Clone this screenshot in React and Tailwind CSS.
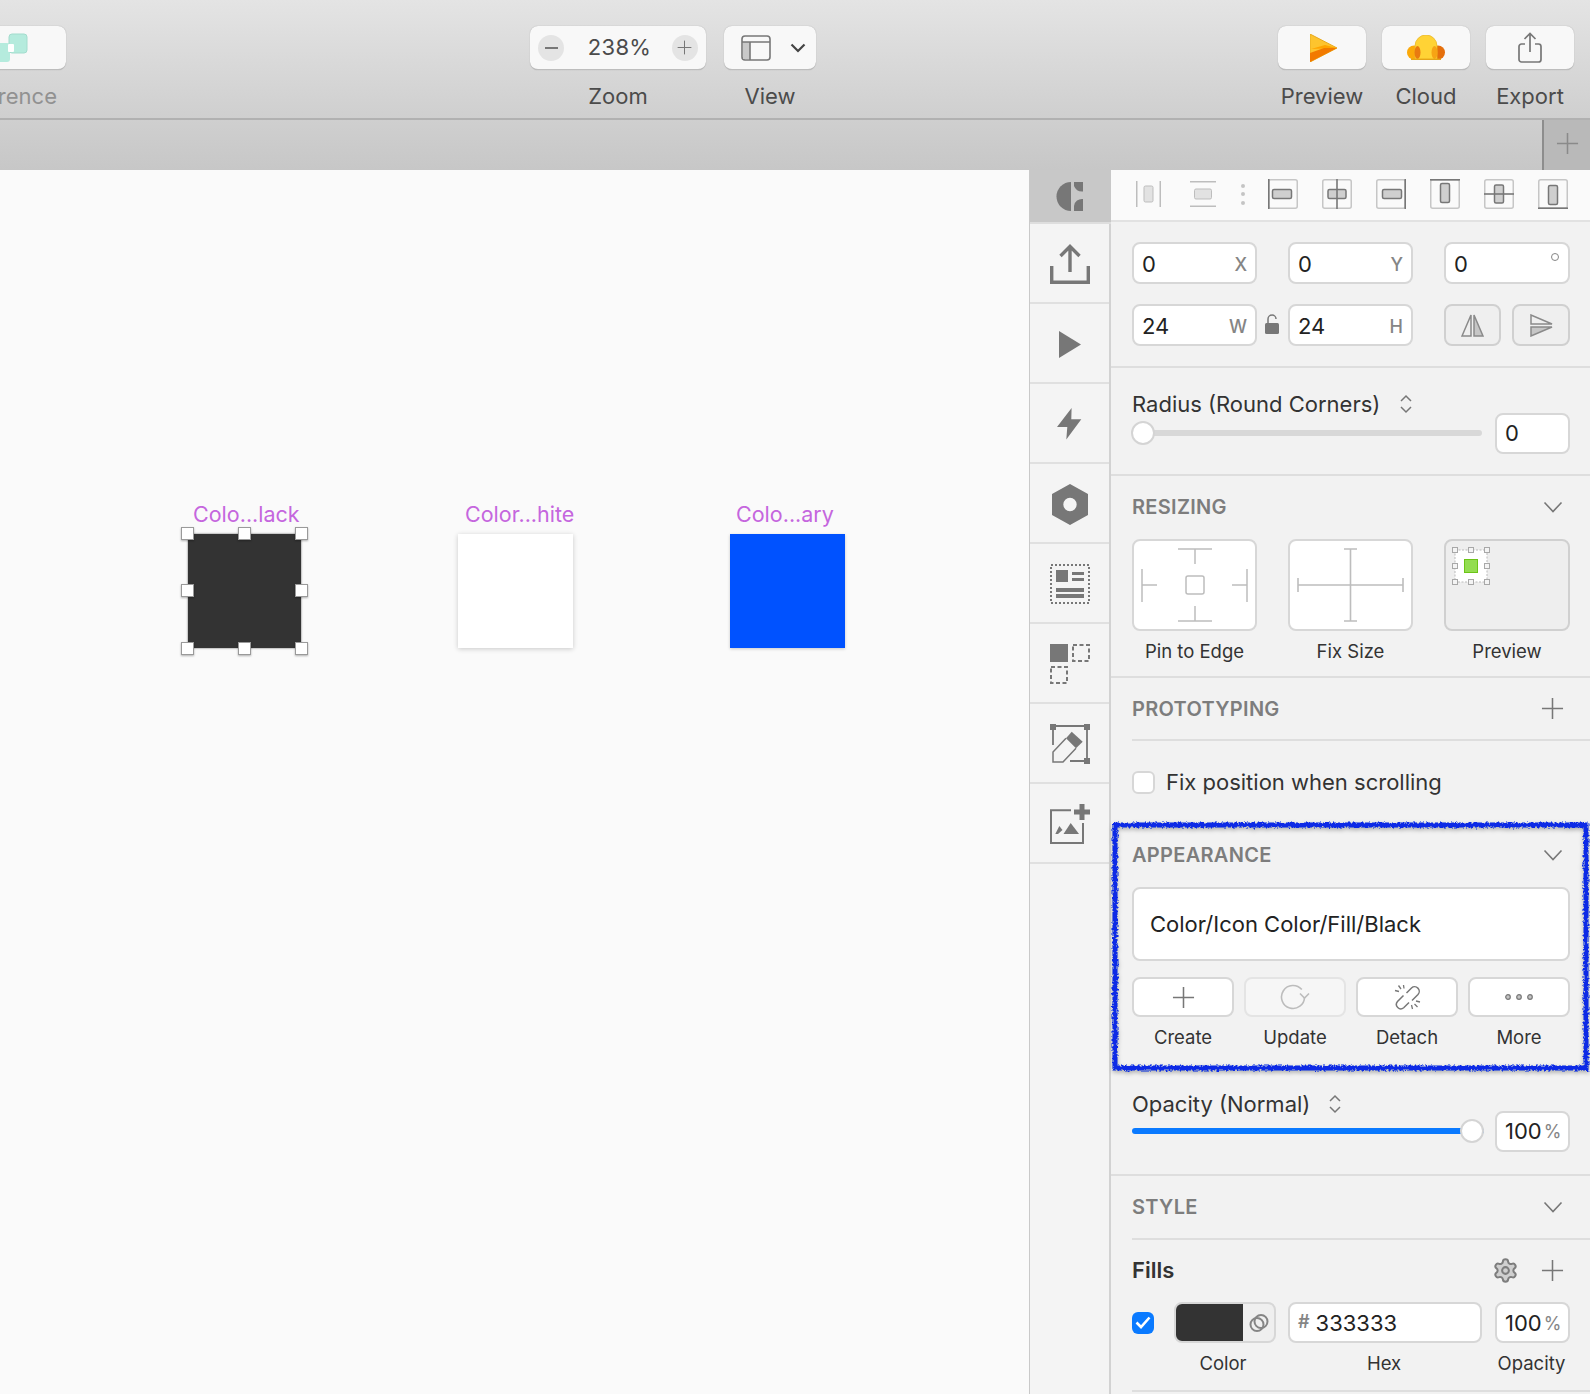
import { Settings } from 'lucide-react';

const ChevronDown = ({ className = 'w-[20px] h-[12px]' }) => (
  <svg viewBox="0 0 20 12" className={className} fill="none" stroke="#777" strokeWidth="1.6">
    <path d="M1.5 1.5 10 10.5 18.5 1.5" />
  </svg>
);

const Plus = ({ size = 23, color = '#777', width = 1.6 }) => (
  <svg viewBox="0 0 24 24" width={size} height={size} fill="none" stroke={color} strokeWidth={width}>
    <path d="M12 1v22M1 12h22" />
  </svg>
);

const UpDown = () => (
  <svg viewBox="0 0 14 20" className="w-[14px] h-[20px]" fill="none" stroke="#777" strokeWidth="1.5">
    <path d="M2 7 7 2l5 5M2 13l5 5 5-5" />
  </svg>
);

function ToolItem({ label, className = '', children }) {
  return (
    <div className={`flex flex-col items-center ${className}`}>
      <div className="w-full h-[44px] rounded-lg bg-[#f8f8f8] border-b border-[#bdbdbd] shadow-[0_0_1px_rgba(0,0,0,0.3)] flex items-center justify-center">
        {children}
      </div>
      <div className="mt-[13px] text-[22px] leading-[26px] text-[#4b4b4b]">{label}</div>
    </div>
  );
}

function Toolbar() {
  return (
    <div className="h-[120px] shrink-0 flex pt-[26px] bg-linear-to-b from-[#e4e4e4] to-[#cfcfcf] border-b-2 border-[#b1b1b1]">
      <div className="w-[66px] shrink-0 flex flex-col items-end">
        <div className="w-full h-[44px] rounded-r-lg bg-[#f8f8f8] border-b border-[#bdbdbd] shadow-[0_0_1px_rgba(0,0,0,0.3)] flex items-center overflow-hidden">
          <svg width="28" height="30" viewBox="0 0 28 30">
            <rect x="-7" y="10" width="17" height="19" rx="3" fill="#b5ebdd" />
            <rect x="9" y="1" width="18" height="19" rx="3" fill="#b5ebdd" stroke="#a3dccd" />
            <rect x="8" y="11" width="6" height="8" rx="1" fill="#fff" />
          </svg>
        </div>
        <div className="mt-[13px] mr-[9px] text-[22px] leading-[26px] text-[#919191]">rence</div>
      </div>

      <ToolItem label="Zoom" className="w-[176px] ml-[464px]">
        <div className="flex items-center w-full px-[8px] justify-between">
          <div className="w-[26px] h-[26px] rounded-full bg-[#e4e4e4] flex items-center justify-center"><div className="w-[13px] h-[2px] bg-[#777]" /></div>
          <span className="ml-[3px] text-[22px] text-[#4b4b4b] tracking-[0.3px]">238%</span>
          <div className="w-[26px] h-[26px] rounded-full bg-[#e4e4e4] flex items-center justify-center"><Plus size={15} /></div>
        </div>
      </ToolItem>
      <ToolItem label="View" className="w-[92px] ml-[18px]">
        <svg width="30" height="26" viewBox="0 0 30 26" className="mr-[19px] ml-[6px]">
          <rect x="1" y="1" width="28" height="24" rx="3" fill="none" stroke="#777" strokeWidth="1.6" />
          <rect x="2" y="7" width="7" height="17" fill="#c9c9c9" />
          <path d="M1 7h28M9 7v18" stroke="#777" strokeWidth="1.6" />
        </svg>
        <svg width="16" height="10" viewBox="0 0 16 10" fill="none" stroke="#444" strokeWidth="2.2"><path d="M1.500 1.500 8 8l6.500-6.500" /></svg>
      </ToolItem>

      <ToolItem label="Preview" className="w-[88px] ml-[462px]">
        <svg width="27" height="28" viewBox="0 0 27 28" className="ml-[2px]">
          <path d="M0 0 27 14 0 28Z" fill="#fdc42e" />
          <path d="M0 0 27 14 0 28Z" fill="none" stroke="#e7a91e" strokeWidth="1" />
          <path d="M1 15 15 11 27 14Z" fill="#ffa400" />
          <path d="M0 28V19L14 14H27Z" fill="#f27a00" />
        </svg>
      </ToolItem>
      <ToolItem label="Cloud" className="w-[88px] ml-[16px]">
        <svg width="38" height="25" viewBox="0 0 38 25">
          <circle cx="7" cy="17.500" r="7" fill="#fba90a" />
          <circle cx="31" cy="17.500" r="7" fill="#e56f0c" />
          <path d="M8 24.500V11a11 11 0 0 1 22 0V24.500Z" fill="#ffd335" stroke="#eab72a" strokeWidth="0.800" />
          <ellipse cx="10.500" cy="17.500" rx="3" ry="6.500" fill="#e97a10" />
          <ellipse cx="27.500" cy="17.500" rx="3" ry="6.500" fill="#f7a414" />
          <path d="M4 24.300h30" stroke="#e5a517" strokeWidth="1.400" />
        </svg>
      </ToolItem>
      <ToolItem label="Export" className="w-[88px] ml-[16px]">
        <svg width="24" height="31" viewBox="0 0 24 31" fill="none" stroke="#777" strokeWidth="1.7">
          <path d="M7 12H3.500A2.500 2.500 0 0 0 1 14.500V27.500A2.500 2.500 0 0 0 3.500 30h17a2.500 2.500 0 0 0 2.500-2.500V14.500A2.500 2.500 0 0 0 20.500 12H17" />
          <path d="M12 20V1.500M6.500 7 12 1.500 17.500 7" />
        </svg>
      </ToolItem>
    </div>
  );
}

function TabBar() {
  return (
    <div className="h-[50px] shrink-0 flex justify-end bg-linear-to-b from-[#cfcfcf] to-[#c7c7c7]">
      <div className="w-[48px] bg-[#b9b9b9] border-l-2 border-[#8d8d8d] flex items-center justify-center pb-[4px]">
        <Plus size={23} color="#8a8a8a" />
      </div>
    </div>
  );
}

const handleSpots = [
  'left-[-7px] top-[-7px]', 'left-[50px] top-[-7px]', 'right-[-7px] top-[-7px]',
  'left-[-7px] top-[50px]', 'right-[-7px] top-[50px]',
  'left-[-7px] bottom-[-7px]', 'left-[50px] bottom-[-7px]', 'right-[-7px] bottom-[-7px]',
];

function Artboard({ label, labelClass, className, selected }) {
  return (
    <div className={`relative h-[114px] shrink-0 ${className}`}>
      <div className={`absolute bottom-full mb-[7px] whitespace-nowrap text-[21.500px] leading-[26px] text-[#c566de] ${labelClass}`}>{label}</div>
      {selected && handleSpots.map((spot) => (
        <div key={spot} className={`absolute w-[13px] h-[13px] bg-white border border-[#9a9a9a] shadow-[0_1px_2px_rgba(0,0,0,0.3)] ${spot}`} />
      ))}
    </div>
  );
}

function Canvas() {
  return (
    <div className="w-[1029px] shrink-0 bg-[#fafafa] pt-[364px] pl-[188px] flex gap-[157px] items-start">
      <Artboard label="Colo...lack" labelClass="left-[5px]" className="w-[113px] bg-[#333333] shadow-[0_0_2px_rgba(0,0,0,0.6)]" selected />
      <Artboard label="Color...hite" labelClass="left-[7px]" className="w-[115px] bg-white shadow-[0_1px_5px_rgba(0,0,0,0.2)]" />
      <Artboard label="Colo...ary" labelClass="left-[6px]" className="w-[115px] bg-[#0052ff] shadow-[0_1px_3px_rgba(0,0,0,0.2)]" />
    </div>
  );
}

function Rail() {
  const cells = [
    <svg key="upload" width="40" height="40" viewBox="0 0 40 40" fill="none" stroke="#777" strokeWidth="3.400">
      <path d="M1.700 22V38.300H38.300V22" />
      <path d="M20 28V3.500M10.500 12 20 2.500 29.500 12" />
    </svg>,
    <svg key="play" width="22" height="27" viewBox="0 0 22 27" fill="#777"><path d="M0 0 22 13.500 0 27Z" /></svg>,
    <svg key="bolt" width="25" height="32" viewBox="0 0 25 32" fill="#777"><path d="M14.600 0 0 19H10.300L9.300 31.500 24.300 11.300H14.300Z" /></svg>,
    <svg key="hex" width="36" height="41" viewBox="0 0 36 41">
      <path fillRule="evenodd" fill="#777" d="M18 0 36 10V31L18 41 0 31V10ZM18 13.800a6.700 6.700 0 1 0 0 13.400 6.700 6.700 0 0 0 0-13.400Z" />
    </svg>,
    <svg key="data" width="40" height="40" viewBox="0 0 40 40" fill="#777">
      <rect x="1" y="1" width="38" height="38" fill="none" stroke="#777" strokeWidth="2" strokeDasharray="2 2" />
      <rect x="6" y="6" width="12" height="12" />
      <rect x="22" y="8" width="12" height="3" />
      <rect x="22" y="14" width="12" height="3" />
      <rect x="6" y="24" width="28" height="4" />
      <rect x="6" y="30" width="28" height="4" />
    </svg>,
    <svg key="symbols" width="40" height="40" viewBox="0 0 40 40">
      <rect width="18" height="18" fill="#777" />
      <rect x="23" y="1" width="16" height="16" fill="none" stroke="#777" strokeWidth="2" strokeDasharray="4 2.500" />
      <rect x="1" y="23" width="16" height="16" fill="none" stroke="#777" strokeWidth="2" strokeDasharray="4 2.500" />
    </svg>,
    <svg key="edit" width="40" height="40" viewBox="0 0 40 40" fill="#777">
      <rect width="6" height="6" />
      <rect x="34" width="6" height="6" />
      <rect x="34" y="34" width="6" height="6" />
      <path d="M6 2H34M37 6V34M3 6V21M20 37H34" fill="none" stroke="#777" strokeWidth="1.800" />
      <path d="M21.700 7.700 32.700 17.700 26 24.300 16 14.300Z" />
      <path d="M16 14.300 3 28V38H13L26 24.300" fill="none" stroke="#777" strokeWidth="1.500" />
    </svg>,
    <svg key="image" width="40" height="40" viewBox="0 0 40 40" fill="#777">
      <path d="M21 6.300H1V39H33V19" fill="none" stroke="#777" strokeWidth="2" />
      <rect x="24" y="5.500" width="16" height="5" />
      <rect x="29.500" width="5" height="16" />
      <path d="M20.700 19 29 30H13.500Z" />
      <path d="M9.300 22 12.500 26 8 30H5.300Z" />
    </svg>,
  ];
  return (
    <div className="w-[82px] shrink-0 bg-[#f4f4f4] border-l border-[#c9c9c9] border-r-2 border-r-[#d2d2d2] flex flex-col">
      <div className="h-[54px] -mr-[2px] bg-[#c8c8c8] border-b-2 border-[#dedede] flex items-center justify-center pr-[5px]">
        <svg width="29" height="29" viewBox="0 0 29 29" fill="#777">
          <path d="M17 0A14.500 14.500 0 0 0 17 29Z" />
          <path d="M20 0H29V9.500A9 9 0 0 1 20 4Z" />
          <path d="M20 29V24A8 8 0 0 1 29 17V29Z" />
        </svg>
      </div>
      {cells.map((icon) => (
        <div key={icon.key} className="h-[80px] border-b-2 border-[#e0e0e0] flex items-center justify-center pt-[2px]">{icon}</div>
      ))}
    </div>
  );
}

function AlignIcon({ bar, line }) {
  return (
    <svg width="30" height="30" viewBox="0 0 30 30" fill="none">
      <rect x="0.750" y="0.750" width="28.500" height="28.500" rx="2" stroke="#c6c6c6" strokeWidth="1.500" />
      <rect {...bar} rx="1.500" fill="#cfcfcf" stroke="#777" strokeWidth="1.500" />
      <path d={line} stroke="#777" strokeWidth="1.600" />
    </svg>
  );
}

function AlignRow() {
  return (
    <div className="h-[52px] shrink-0 bg-[#fafafa] border-b-2 border-[#e2e2e2] flex items-center pl-[25px] pb-[2px]">
      <svg width="25" height="26" viewBox="0 0 25 26" fill="none">
        <path d="M0.750 0V26M24.250 0V26" stroke="#bdbdbd" strokeWidth="1.500" />
        <rect x="8" y="5" width="9" height="16" rx="1.500" fill="#e2e2e2" stroke="#bdbdbd" />
      </svg>
      <svg width="26" height="26" viewBox="0 0 26 26" fill="none" className="ml-[29px]">
        <path d="M0 0.750H26M0 25.250H26" stroke="#bdbdbd" strokeWidth="1.500" />
        <rect x="4.500" y="8" width="17" height="10" rx="1.500" fill="#e2e2e2" stroke="#bdbdbd" />
      </svg>
      <div className="ml-[25px] w-[4px] flex flex-col gap-[4.500px]">
        <div className="w-[4px] h-[4px] rounded-full bg-[#c4c4c4]" />
        <div className="w-[4px] h-[4px] rounded-full bg-[#c4c4c4]" />
        <div className="w-[4px] h-[4px] rounded-full bg-[#c4c4c4]" />
      </div>
      <div className="ml-[23px] flex gap-[24px]">
        <AlignIcon bar={{ x: 4.500, y: 10.500, width: 19, height: 9 }} line="M0.800 0V30" />
        <AlignIcon bar={{ x: 6, y: 10.500, width: 18, height: 9 }} line="M15 0V30" />
        <AlignIcon bar={{ x: 6.500, y: 10.500, width: 19, height: 9 }} line="M29.200 0V30" />
        <AlignIcon bar={{ x: 10.500, y: 4.500, width: 9, height: 19 }} line="M0 0.800H30" />
        <AlignIcon bar={{ x: 10.500, y: 6, width: 9, height: 18 }} line="M0 15H30" />
        <AlignIcon bar={{ x: 10.500, y: 6.500, width: 9, height: 19 }} line="M0 29.200H30" />
      </div>
    </div>
  );
}

function Field({ value, suffix }) {
  return (
    <div className="h-[42px] w-[125px] shrink-0 rounded-lg border-2 border-[#d7d7d7] bg-white flex items-center justify-between pl-[8px] pr-[8px] pt-[2px] text-[22px] text-[#222]">
      <span>{value}</span>
      {suffix && <span className="text-[18px] font-medium text-[#858585]">{suffix}</span>}
    </div>
  );
}

function Transform() {
  return (
    <div className="h-[146px] shrink-0 border-b-2 border-[#dedede] pt-[20px] pl-[21px] flex flex-col gap-[20px]">
      <div className="flex gap-[31px]">
        <Field value="0" suffix="X" />
        <Field value="0" suffix="Y" />
        <div className="h-[42px] w-[126px] shrink-0 rounded-lg border-2 border-[#d7d7d7] bg-white flex justify-between pl-[8px] pr-[9px] pt-[2px] text-[22px] text-[#222]">
          <span className="self-center">0</span>
          <div className="w-[8px] h-[8px] mt-[7px] rounded-full border-[1.500px] border-[#858585]" />
        </div>
      </div>
      <div className="flex items-center">
        <Field value="24" suffix="W" />
        <div className="w-[31px] flex justify-center pb-[3px]">
          <svg width="15" height="20" viewBox="0 0 15 20" fill="#777">
            <path d="M3 9V5a4 4 0 0 1 8 0" fill="none" stroke="#777" strokeWidth="1.500" />
            <rect y="9" width="14" height="11" rx="1.500" />
          </svg>
        </div>
        <Field value="24" suffix="H" />
        <div className="ml-[31px] flex gap-[11px]">
          <div className="w-[57px] h-[42px] rounded-lg border-2 border-[#d0d0d0] bg-[#efefef] flex items-center justify-center">
            <svg width="23" height="23" viewBox="0 0 23 23" stroke="#8a8a8a" strokeWidth="1.500">
              <path d="M10 1 1 22H10Z" fill="none" />
              <path d="M13 1 22 22H13Z" fill="#c6c6c6" />
            </svg>
          </div>
          <div className="w-[58px] h-[42px] rounded-lg border-2 border-[#d0d0d0] bg-[#efefef] flex items-center justify-center">
            <svg width="23" height="23" viewBox="0 0 23 23" stroke="#8a8a8a" strokeWidth="1.500">
              <path d="M1 10 22 10 1 1Z" fill="none" />
              <path d="M1 13 22 13 1 22Z" fill="#c6c6c6" />
            </svg>
          </div>
        </div>
      </div>
    </div>
  );
}

function SliderRow({ label, value, percent, leftWidth, topPad, knobGap, fieldTop, gap, className }) {
  return (
    <div className={`shrink-0 border-b-2 border-[#dedede] pl-[21px] pr-[20px] flex justify-between ${className}`}>
      <div className={`${leftWidth} ${topPad}`}>
        <div className={`flex items-center text-[22px] leading-[26px] text-[#333] ${gap}`}>
          <span>{label}</span>
          <UpDown />
        </div>
        <div className={`relative h-[24px] flex items-center ${knobGap}`}>
          <div className="w-full h-[6px] rounded-full bg-[#d8d8d8] overflow-hidden">
            <div className="h-full bg-[#0a7aff]" style={{ width: `${percent}%` }} />
          </div>
          <div className={`absolute top-0 w-[24px] h-[24px] rounded-full bg-white border-2 border-[#d4d4d4] ${percent > 50 ? 'right-0' : 'left-[-1px]'}`} />
        </div>
      </div>
      <div className={fieldTop}>
        <div className="h-[41px] w-[75px] rounded-lg border-2 border-[#d7d7d7] bg-white flex items-center pl-[8px] text-[22px] text-[#222]">
          {value}
        </div>
      </div>
    </div>
  );
}

function SectionHeader({ title, icon, className = '' }) {
  return (
    <div className={`flex items-center justify-between ${className}`}>
      <span className="text-[20px] leading-[24px] font-semibold tracking-[0.3px] text-[#7d7d7d]">{title}</span>
      {icon || <ChevronDown />}
    </div>
  );
}

function Resizing() {
  return (
    <div className="h-[202px] shrink-0 border-b-2 border-[#dedede] pt-[19px] pl-[21px]">
      <SectionHeader title="RESIZING" className="pr-[27px]" />
      <div className="mt-[20px] flex gap-[31px]">
        <div className="w-[125px] h-[92px] rounded-lg border-2 border-[#d7d7d7] bg-white">
          <svg width="121" height="88" viewBox="0 0 121 88" fill="none" stroke="#bdbdbd" strokeWidth="1.500">
            <path d="M44 8H78M61 8V23M44 80H78M61 65V80M8 28V61M8 44H23M113 28V61M98 44H113" />
            <rect x="52" y="35" width="18" height="18" rx="2" />
          </svg>
        </div>
        <div className="w-[125px] h-[92px] rounded-lg border-2 border-[#d7d7d7] bg-white">
          <svg width="121" height="88" viewBox="0 0 121 88" fill="none" stroke="#bdbdbd" strokeWidth="1.600">
            <path d="M60.500 8V80M54 8H67M54 80H67M8 44H113M8 37V51M113 37V51" />
          </svg>
        </div>
        <div className="w-[126px] h-[92px] rounded-lg border-2 border-[#d0d0d0] bg-[#eeeeee]">
          <svg width="50" height="50" viewBox="0 0 50 50" fill="none">
            <rect x="9" y="9" width="32" height="32" fill="#fff" stroke="#bbb" strokeDasharray="2 1.500" />
            {[[9, 9], [25, 9], [41, 9], [9, 25], [41, 25], [9, 41], [25, 41], [41, 41]].map(([x, y]) => (
              <rect key={`${x}-${y}`} x={x - 2.500} y={y - 2.500} width="5" height="5" fill="#f4f4f4" stroke="#a8a8a8" />
            ))}
            <rect x="18.500" y="18.500" width="13" height="13" fill="#93dd50" stroke="#6cc417" />
          </svg>
        </div>
      </div>
      <div className="mt-[8px] flex gap-[31px] text-[18.500px] leading-[24px] text-[#333] text-center">
        <div className="w-[125px]">Pin to Edge</div>
        <div className="w-[125px]">Fix Size</div>
        <div className="w-[126px]">Preview</div>
      </div>
    </div>
  );
}

function Prototyping() {
  return (
    <div className="h-[144px] shrink-0 pl-[21px] flex flex-col">
      <SectionHeader title="PROTOTYPING" icon={<Plus />} className="h-[63px] shrink-0 border-b-2 border-[#dedede] pr-[26px]" />
      <div className="flex-1 flex items-center gap-[11px] pt-[2px]">
        <div className="w-[23px] h-[23px] rounded-md border-2 border-[#d7d7d7] bg-white" />
        <span className="text-[22px] text-[#333]">Fix position when scrolling</span>
      </div>
    </div>
  );
}

function ActionButton({ label, disabled, children }) {
  return (
    <div className="w-[102px]">
      <div className={`h-[40px] rounded-lg border-2 flex items-center justify-center ${disabled ? 'bg-[#f6f6f6] border-[#e4e4e4]' : 'bg-white border-[#d7d7d7]'}`}>
        {children}
      </div>
      <div className="mt-[8px] text-center text-[18.500px] leading-[24px] text-[#333]">{label}</div>
    </div>
  );
}

function Appearance() {
  return (
    <div className="relative h-[250px] shrink-0 pt-[21px] pl-[21px] pr-[20px]">
      <SectionHeader title="APPEARANCE" className="-mr-[20px] pr-[27px]" />
      <div className="mt-[20px] h-[74px] rounded-lg border-2 border-[#d7d7d7] bg-white flex items-center pl-[16px] text-[22px] text-[#222]">
        Color/Icon Color/Fill/Black
      </div>
      <div className="mt-[16px] flex justify-between">
        <ActionButton label="Create"><Plus size={23} /></ActionButton>
        <ActionButton label="Update" disabled>
          <svg width="30" height="28" viewBox="0 0 30 28" fill="none" stroke="#bcbcbc" strokeWidth="1.600">
            <path d="M24.500 14A11.500 11.500 0 1 1 21.800 6.600" />
            <path d="M20 10.500 24.500 15 29 10.500" />
          </svg>
        </ActionButton>
        <ActionButton label="Detach">
          <svg width="27" height="27" viewBox="0 0 27 27" fill="none" stroke="#777" strokeWidth="1.500">
            <path d="M12.500 9 17.500 4a4.600 4.600 0 0 1 6.500 6.500L18 16.500" />
            <path d="M9.500 11.500 3.500 17.500a4.400 4.400 0 0 0 6.200 6.200L15 18.500" />
            <path d="M4.500 1.500 7 5M1 6.500l4 1M9.500 1l.5 3.500M22 17l4 1M17.500 21l1 4M20.500 20l3 3" strokeWidth="1.300" />
          </svg>
        </ActionButton>
        <ActionButton label="More">
          <svg width="28" height="6" viewBox="0 0 28 6" fill="#c4c4c4" stroke="#777" strokeWidth="1.200">
            <circle cx="3" cy="3" r="2.300" />
            <circle cx="14" cy="3" r="2.300" />
            <circle cx="25" cy="3" r="2.300" />
          </svg>
        </ActionButton>
      </div>
      {/* hand drawn highlight over the section */}
      <svg className="absolute inset-0 w-full h-full overflow-visible pointer-events-none drop-shadow-[0_2px_2px_rgba(0,0,0,0.3)]">
        <filter id="rough" x="-5%" y="-5%" width="110%" height="110%">
          <feTurbulence type="fractalNoise" baseFrequency="0.45" numOctaves="2" seed="4" />
          <feDisplacementMap in="SourceGraphic" scale="5" />
        </filter>
        <rect x="4" y="3" width="471" height="243" fill="none" stroke="#0a2ce6" strokeWidth="5" filter="url(#rough)" />
      </svg>
    </div>
  );
}

function Fills() {
  return (
    <div className="h-[152px] shrink-0 ml-[21px] border-b-2 border-[#dedede] pt-[18px] pr-[20px]">
      <div className="flex items-center justify-between h-[24px]">
        <span className="text-[22px] font-semibold text-[#333]">Fills</span>
        <div className="flex items-center gap-[22px] mr-[6px]">
          <Settings size={27} color="#7d7d7d" fill="#cfcfcf" strokeWidth={1.800} />
          <Plus />
        </div>
      </div>
      <div className="mt-[20px] flex items-center">
        <div className="w-[22px] h-[22px] rounded-md bg-[#0a7aff] flex items-center justify-center">
          <svg width="16" height="13" viewBox="0 0 16 13" fill="none" stroke="#fff" strokeWidth="2.600"><path d="M1.500 6.500 6 11l8.500-9.500" /></svg>
        </div>
        <div className="ml-[20px] w-[102px] h-[41px] rounded-lg border-2 border-[#d7d7d7] bg-[#efefef] flex items-center overflow-hidden">
          <div className="w-[69px] h-[41px] -ml-[2px] shrink-0 bg-[#333333]" />
          <svg width="20" height="20" viewBox="0 0 20 20" fill="none" stroke="#858585" strokeWidth="2" className="ml-[6px]">
            <circle cx="8" cy="11.500" r="6.500" />
            <circle cx="12" cy="8.500" r="6.500" />
          </svg>
        </div>
        <div className="ml-[12px] w-[194px] h-[41px] rounded-lg border-2 border-[#d7d7d7] bg-white flex items-center pl-[8px] pt-[2px] text-[22px] text-[#222]">
          <span className="text-[18px] font-semibold text-[#858585] mr-[6px] -mt-[5px]">#</span>
          333333
        </div>
        <div className="ml-[13px] w-[75px] h-[41px] rounded-lg border-2 border-[#d7d7d7] bg-white flex items-center pl-[8px] pt-[2px] text-[22px] text-[#222]">
          100<span className="ml-[2px] text-[18px] text-[#858585]">%</span>
        </div>
      </div>
      <div className="mt-[8px] flex text-[18.500px] leading-[24px] text-[#333] text-center">
        <div className="ml-[40px] w-[102px]">Color</div>
        <div className="ml-[13px] w-[194px]">Hex</div>
        <div className="ml-[13px] w-[75px] whitespace-nowrap">Opacity</div>
      </div>
    </div>
  );
}

function Inspector() {
  return (
    <div className="flex-1 bg-[#f2f2f2] flex flex-col">
      <AlignRow />
      <Transform />
      <SliderRow
        className="h-[108px]"
        label="Radius (Round Corners)"
        value="0"
        percent={0}
        gap="gap-[19px]"
        leftWidth="w-[350px]"
        topPad="pt-[23px]"
        knobGap="mt-[4px]"
        fieldTop="pt-[45px]"
      />
      <Resizing />
      <Prototyping />
      <Appearance />
      <SliderRow
        className="h-[104px]"
        label="Opacity (Normal)"
        value={<>100<span className="ml-[2px] text-[18px] text-[#858585]">%</span></>}
        percent={100}
        gap="gap-[18px]"
        leftWidth="w-[352px]"
        topPad="pt-[19px]"
        knobGap="mt-[2px]"
        fieldTop="pt-[39px]"
      />
      <SectionHeader title="STYLE" className="h-[64px] shrink-0 ml-[21px] border-b-2 border-[#dedede] pr-[27px]" />
      <Fills />
    </div>
  );
}

export default function App() {
  return (
    <div className="w-[1590px] h-[1394px] overflow-hidden flex flex-col [font-family:Inter,'Liberation_Sans',sans-serif]">
      <Toolbar />
      <TabBar />
      <div className="flex flex-1 min-h-0">
        <Canvas />
        <Rail />
        <Inspector />
      </div>
    </div>
  );
}
